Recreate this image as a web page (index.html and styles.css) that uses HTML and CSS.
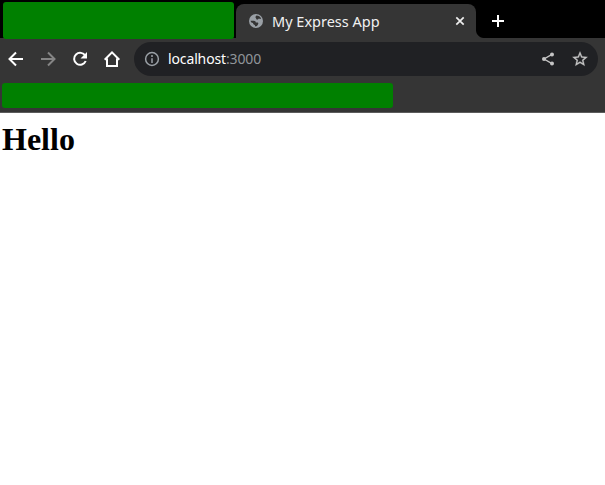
FILE: index.html
```html
<!DOCTYPE html>
<html lang="en">
<head>
<meta charset="utf-8">
<title>My Express App</title>
<link rel="stylesheet" href="styles.css">
</head>
<body>
<header class="browser">
  <div class="tabs">
    <div class="cover cover-tab"></div>
    <div class="tab">
      <svg class="globe" viewBox="0 0 16 16"><circle cx="8" cy="8" r="7" fill="#9aa0a6"/><path fill="#353535" d="M8.500 2.500c1.900 0 3.800 1.200 4.600 3-.5.500-1.100.5-1.600.2-.6-.3-1 .1-1.500.6-.7.700-1.800.3-1.800-.5 0-.6-.5-.8-.7-1.300-.2-.7.300-1.500 1-2zM2.600 7.700h3.200c1.300 0 2 .9 2 1.900h1.400c.9 0 1.300.7 1 1.500l-.5.900c-.4.900-1.200 1.400-2.100 1.400-.6-.2-.7-.8-.7-1.500-1.200 0-1.900-.8-1.900-1.900-1.200 0-2.200-1-2.400-2.300z"/></svg>
      <span class="tab-title">My Express App</span>
      <svg class="close" viewBox="0 0 10 10"><path d="M1.300 1.300l7.400 7.400M8.700 1.300L1.300 8.700"/></svg>
    </div>
    <svg class="plus" viewBox="0 0 12 12"><path d="M6 0v12M0 6h12"/></svg>
  </div>
  <div class="toolbar">
    <nav class="nav">
      <svg viewBox="0 0 20 20"><path d="M17 10H4M10 3.500L3.500 10l6.500 6.500"/></svg>
      <svg class="disabled" viewBox="0 0 20 20"><path d="M3 10h13M10 3.500l6.500 6.500-6.500 6.500"/></svg>
      <svg viewBox="0 0 20 20"><path d="M15.300 6.800A6 6 0 1 0 15.700 12"/><path class="tip" d="M17 3v6.500h-6.500z"/></svg>
      <svg viewBox="0 0 20 20"><path d="M2.700 10.700L10 3.300l7.300 7.400M5 9.500V17h10V9.500"/></svg>
    </nav>
    <div class="address">
      <svg class="info" viewBox="0 0 18 18"><circle cx="9" cy="9" r="6.400"/><path d="M9 5v2M9 8.200V13"/></svg>
      <span class="url">localhost<span class="port">:3000</span></span>
      <svg class="share" viewBox="0 0 14 14"><path d="M11 2.400L3 7l8 4.600"/><circle cx="11" cy="2.400" r="2"/><circle cx="3" cy="7" r="2"/><circle cx="11" cy="11.600" r="2"/></svg>
      <svg class="star" viewBox="0 0 24 24"><path d="M22 9.240l-7.190-.62L12 2 9.190 8.630 2 9.240l5.460 4.730L5.820 21 12 17.270 18.180 21l-1.630-7.030zM12 15.400l-3.760 2.270 1-4.280-3.320-2.880 4.380-.38L12 6.100l1.710 4.040 4.380.38-3.320 2.880 1 4.280z"/></svg>
    </div>
  </div>
  <div class="bookmarks"><div class="cover cover-bookmarks"></div></div>
</header>
<main><h1>Hello</h1></main>
</body>
</html>
```

FILE: styles.css
```css
* { box-sizing: border-box; }
body { margin: 0; background: #fff; }
svg { display: block; flex: none; }
.browser {
  height: 113px;
  background: #353535;
  border-bottom: 1px solid #5c5c5c;
  font-family: "Noto Sans", "Open Sans", sans-serif;
}
.tabs { height: 38px; display: flex; background: #000; padding-left: 3px; }
.cover { background: #008000; border-radius: 3px; }
.cover-tab { position: relative; width: 231px; height: 37px; margin-top: 2px; flex: none; }
.tab {
  position: relative;
  display: flex;
  align-items: center;
  width: 240px;
  height: 34px;
  margin: 4px 0 0 2px;
  padding: 0 11px 0 12px;
  background: #353535;
  border-radius: 8px 8px 0 0;
}
.tab::after {
  content: "";
  position: absolute;
  left: 100%;
  bottom: 0;
  width: 8px;
  height: 8px;
  background: radial-gradient(circle at 100% 0, #000 7.500px, #353535 8.500px);
}
.globe { width: 16px; height: 16px; }
.tab-title { flex: 1; margin: -1px 0 0 8px; color: #f1f1f1; font-size: 14.500px; line-height: 20px; white-space: nowrap; }
.close { width: 10px; height: 10px; fill: none; stroke: #eee; stroke-width: 1.700; }
.plus { width: 12px; height: 12px; margin: 15px 0 0 16px; stroke: #fff; stroke-width: 2; }
.toolbar { height: 41px; display: flex; padding: 4px 7px 3px 6px; }
.nav { display: flex; align-items: center; gap: 12px; width: 128px; flex: none; }
.nav svg { width: 20px; height: 20px; fill: none; stroke: #fff; stroke-width: 2; }
.nav .disabled { stroke: #858585; }
.nav .tip { fill: #fff; stroke: none; }
.address {
  display: flex;
  align-items: center;
  flex: 1;
  height: 34px;
  padding: 0 9px 0 9px;
  border-radius: 17px;
  background: #202124;
}
.info { width: 18px; height: 18px; fill: none; stroke: #9aa0a6; stroke-width: 1.500; }
.url { flex: 1; margin-left: 7px; color: #fff; font-size: 14px; line-height: 20px; letter-spacing: -.13px; }
.port { color: #90959a; }
.share { width: 14px; height: 14px; margin-right: 16px; fill: #c4c4c4; }
.share path { fill: none; stroke: #c4c4c4; stroke-width: 1.300; }
.star { width: 18px; height: 18px; fill: #c4c4c4; stroke: #c4c4c4; stroke-width: .4; }
.bookmarks { padding: 4px 0 0 2px; }
.cover-bookmarks { width: 391px; height: 25px; }
main { padding: 8px 2px; }
h1 { margin: 0; font: bold 32px/37px "Liberation Serif", serif; color: #000; }
```
